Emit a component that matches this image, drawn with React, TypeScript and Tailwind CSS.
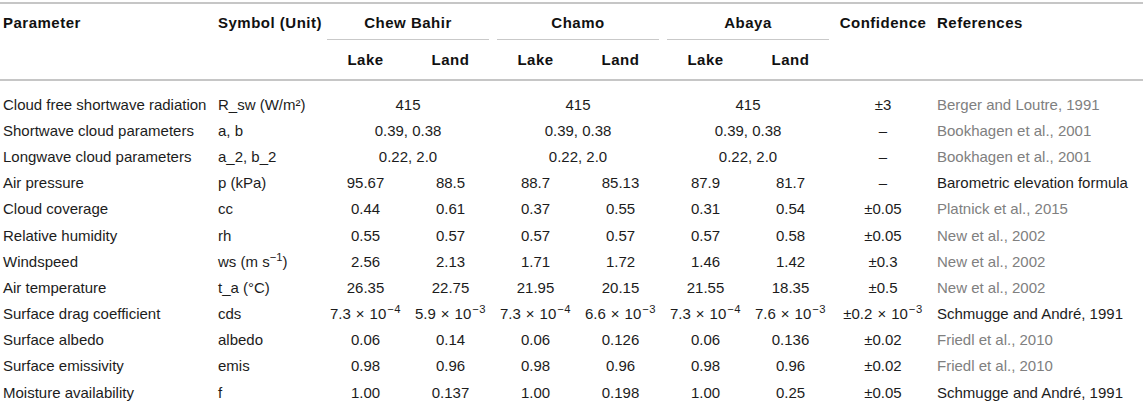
import React from "react";

const GRID =
  "grid grid-cols-[214px_109px_85px_85px_85px_85px_85px_85px_100px_210px]";

type Cell = { v: React.ReactNode; span?: number };
type Row = {
  p: string;
  s: React.ReactNode;
  cells: Cell[];
  c: React.ReactNode;
  r: string;
  gray: boolean;
};

const E = (a: string, e: string) => (
  <>
    {a}
    <span className="mx-[5px]">×</span>10
    <sup className="pl-[1px] tracking-[0.5px]">−{e}</sup>
  </>
);

const rows: Row[] = [
  {
    p: "Cloud free shortwave radiation",
    s: "R_sw (W/m²)",
    cells: [
      { v: "415", span: 2 },
      { v: "415", span: 2 },
      { v: "415", span: 2 },
    ],
    c: "±3",
    r: "Berger and Loutre, 1991",
    gray: true,
  },
  {
    p: "Shortwave cloud parameters",
    s: "a, b",
    cells: [
      { v: "0.39, 0.38", span: 2 },
      { v: "0.39, 0.38", span: 2 },
      { v: "0.39, 0.38", span: 2 },
    ],
    c: "–",
    r: "Bookhagen et al., 2001",
    gray: true,
  },
  {
    p: "Longwave cloud parameters",
    s: "a_2, b_2",
    cells: [
      { v: "0.22, 2.0", span: 2 },
      { v: "0.22, 2.0", span: 2 },
      { v: "0.22, 2.0", span: 2 },
    ],
    c: "–",
    r: "Bookhagen et al., 2001",
    gray: true,
  },
  {
    p: "Air pressure",
    s: "p (kPa)",
    cells: ["95.67", "88.5", "88.7", "85.13", "87.9", "81.7"].map((v) => ({ v })),
    c: "–",
    r: "Barometric elevation formula",
    gray: false,
  },
  {
    p: "Cloud coverage",
    s: "cc",
    cells: ["0.44", "0.61", "0.37", "0.55", "0.31", "0.54"].map((v) => ({ v })),
    c: "±0.05",
    r: "Platnick et al., 2015",
    gray: true,
  },
  {
    p: "Relative humidity",
    s: "rh",
    cells: ["0.55", "0.57", "0.57", "0.57", "0.57", "0.58"].map((v) => ({ v })),
    c: "±0.05",
    r: "New et al., 2002",
    gray: true,
  },
  {
    p: "Windspeed",
    s: (
      <>
        ws (m s<sup>−1</sup>)
      </>
    ),
    cells: ["2.56", "2.13", "1.71", "1.72", "1.46", "1.42"].map((v) => ({ v })),
    c: "±0.3",
    r: "New et al., 2002",
    gray: true,
  },
  {
    p: "Air temperature",
    s: "t_a (°C)",
    cells: ["26.35", "22.75", "21.95", "20.15", "21.55", "18.35"].map((v) => ({ v })),
    c: "±0.5",
    r: "New et al., 2002",
    gray: true,
  },
  {
    p: "Surface drag coefficient",
    s: "cds",
    cells: [
      { v: E("7.3", "4") },
      { v: E("5.9", "3") },
      { v: E("7.3", "4") },
      { v: E("6.6", "3") },
      { v: E("7.3", "4") },
      { v: E("7.6", "3") },
    ],
    c: E("±0.2", "3"),
    r: "Schmugge and André, 1991",
    gray: false,
  },
  {
    p: "Surface albedo",
    s: "albedo",
    cells: ["0.06", "0.14", "0.06", "0.126", "0.06", "0.136"].map((v) => ({ v })),
    c: "±0.02",
    r: "Friedl et al., 2010",
    gray: true,
  },
  {
    p: "Surface emissivity",
    s: "emis",
    cells: ["0.98", "0.96", "0.98", "0.96", "0.98", "0.96"].map((v) => ({ v })),
    c: "±0.02",
    r: "Friedl et al., 2010",
    gray: true,
  },
  {
    p: "Moisture availability",
    s: "f",
    cells: ["1.00", "0.137", "1.00", "0.198", "1.00", "0.25"].map((v) => ({ v })),
    c: "±0.05",
    r: "Schmugge and André, 1991",
    gray: false,
  },
];

export default function App() {
  return (
    <div
      className="w-[1143px] h-[404px] overflow-hidden bg-white pt-[2px] text-[15px] leading-[16px] text-[#1c1c1c]"
      style={{ fontFamily: '"Liberation Sans", Arial, sans-serif' }}
    >
      <div className="border-t-2 border-b-2 border-[#c6c6c6]">
        {/* header */}
        <div className={`${GRID} font-bold tracking-[0.5px] text-[#111]`}>
          <div className="row-span-2 pl-[3px] pt-[11px] whitespace-nowrap">Parameter</div>
          <div className="row-span-2 pl-[4px] pt-[11px] whitespace-nowrap">Symbol (Unit)</div>
          {["Chew Bahir", "Chamo", "Abaya"].map((g) => (
            <div key={g} className="col-span-2 px-[4px]">
              <div className="h-[36px] pt-[11px] text-center border-b border-[#c9c9c9]">
                {g}
              </div>
            </div>
          ))}
          <div className="row-span-2 pt-[11px] text-center whitespace-nowrap">Confidence</div>
          <div className="row-span-2 pl-[4px] pt-[11px] whitespace-nowrap">References</div>
          {[0, 1, 2, 3, 4, 5].map((i) => (
            <div key={i} className="h-[39px] pt-[12px] text-center">
              {i % 2 === 0 ? "Lake" : "Land"}
            </div>
          ))}
        </div>
      </div>
      {/* body */}
      <div className="pt-[10.5px]">
        {rows.map((row, i) => (
          <div key={i} className={`${GRID} h-[26.2px] items-center`}>
            <div className="pl-[3px] whitespace-nowrap">{row.p}</div>
            <div className="pl-[4px] whitespace-nowrap">{row.s}</div>
            {row.cells.map((c, j) => (
              <div
                key={j}
                className={`${c.span === 2 ? "col-span-2" : ""} text-center whitespace-nowrap`}
              >
                {c.v}
              </div>
            ))}
            <div className="text-center whitespace-nowrap">{row.c}</div>
            <div
              className={`pl-[4px] whitespace-nowrap ${row.gray ? "text-[#808080]" : ""}`}
            >
              {row.r}
            </div>
          </div>
        ))}
      </div>
    </div>
  );
}
